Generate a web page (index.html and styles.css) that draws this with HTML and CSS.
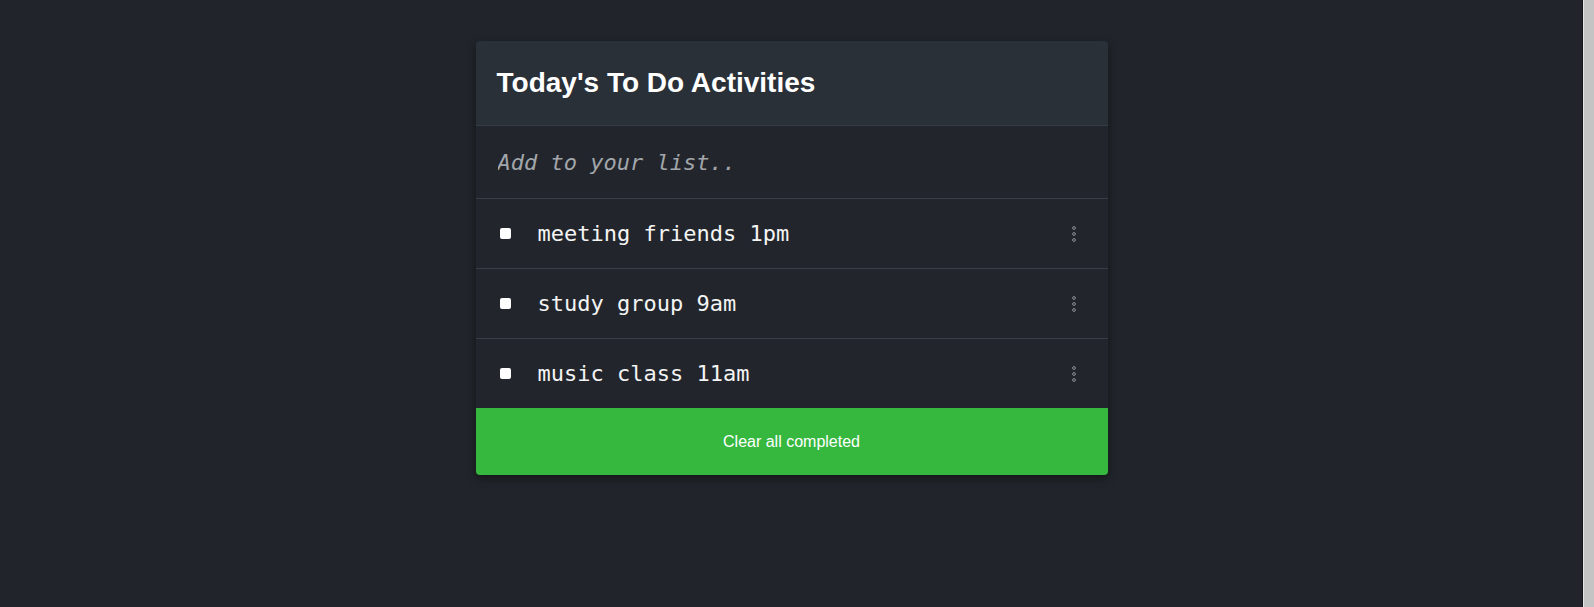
FILE: index.html
```html
<!DOCTYPE html>
<html lang="en">
<head>
<meta charset="utf-8">
<title>Today's To Do Activities</title>
<link rel="stylesheet" href="styles.css">
</head>
<body>
<main class="page">
  <section class="card">
    <header class="card-header">
      <h1 class="title">Today's To Do Activities</h1>
    </header>
    <div class="add-row">
      <input class="add-input" type="text" placeholder="Add to your list..">
    </div>
    <ul class="todo-list">
      <li class="todo-item">
        <input class="check" type="checkbox">
        <span class="todo-text">meeting friends 1pm</span>
        <svg class="kebab" width="6" height="18" viewBox="0 0 6 18"><circle cx="3" cy="3" r="1.4"/><circle cx="3" cy="9" r="1.4"/><circle cx="3" cy="15" r="1.4"/></svg>
      </li>
      <li class="todo-item">
        <input class="check" type="checkbox">
        <span class="todo-text">study group 9am</span>
        <svg class="kebab" width="6" height="18" viewBox="0 0 6 18"><circle cx="3" cy="3" r="1.4"/><circle cx="3" cy="9" r="1.4"/><circle cx="3" cy="15" r="1.4"/></svg>
      </li>
      <li class="todo-item">
        <input class="check" type="checkbox">
        <span class="todo-text">music class 11am</span>
        <svg class="kebab" width="6" height="18" viewBox="0 0 6 18"><circle cx="3" cy="3" r="1.4"/><circle cx="3" cy="9" r="1.4"/><circle cx="3" cy="15" r="1.4"/></svg>
      </li>
    </ul>
    <button class="clear-btn" type="button">Clear all completed</button>
  </section>
</main>
<aside class="scrollbar"></aside>
</body>
</html>
```

FILE: styles.css
```css
html, body {
  margin: 0;
  padding: 0;
  height: 100%;
}

body {
  display: flex;
  background: #21252b;
  font-family: "Liberation Sans", Arial, sans-serif;
  overflow: hidden;
}

.page {
  flex: 1;
  padding-top: 41px;
}

.scrollbar {
  width: 10px;
  background: #c4c4c4;
  border-left: 1px solid #e4e4e4;
  box-shadow: -1px 0 0 #15181c;
}

.card {
  width: 632px;
  margin: 0 auto;
  background: #22262c;
  border-radius: 4px;
  box-shadow: 0 3px 10px rgba(0, 0, 0, 0.45);
}

.card-header {
  height: 84px;
  display: flex;
  align-items: center;
  padding: 0 21px;
  background: #2a3038;
  border-radius: 4px 4px 0 0;
  border-bottom: 1px solid #363c44;
}

.title {
  margin: 0;
  font-size: 28px;
  font-weight: bold;
  color: #ffffff;
}

.add-row {
  height: 72px;
  display: flex;
  align-items: center;
  padding: 0 22px;
  border-bottom: 1px solid #3a3f47;
}

.add-input {
  flex: 1;
  background: transparent;
  border: none;
  outline: none;
  padding: 0;
  font-family: "DejaVu Sans Mono", "Liberation Mono", monospace;
  font-size: 22px;
  color: #e6e6e6;
}

.add-input::placeholder {
  color: #a2a6ab;
  font-style: italic;
}

.todo-list {
  list-style: none;
  margin: 0;
  padding: 0;
}

.todo-item {
  height: 69px;
  display: flex;
  align-items: center;
  padding: 0 31px 0 24px;
  border-bottom: 1px solid #3a3f47;
}

.todo-item:last-child {
  border-bottom: none;
  height: 69px;
}

.check {
  appearance: none;
  -webkit-appearance: none;
  width: 11px;
  height: 11px;
  margin: 0 27px 0 0;
  background: #ffffff;
  border-radius: 2px;
  flex: none;
}

.todo-text {
  flex: 1;
  font-family: "DejaVu Sans Mono", "Liberation Mono", monospace;
  font-size: 22px;
  color: #f4f4f4;
}

.kebab {
  flex: none;
  fill: none;
  stroke: #8b9096;
  stroke-width: 1;
}

.clear-btn {
  display: block;
  width: 100%;
  height: 67px;
  border: none;
  margin: 0;
  background: #36b83f;
  color: #ffffff;
  font-family: "Liberation Sans", Arial, sans-serif;
  font-size: 16px;
  border-radius: 0 0 4px 4px;
  cursor: pointer;
}
```
